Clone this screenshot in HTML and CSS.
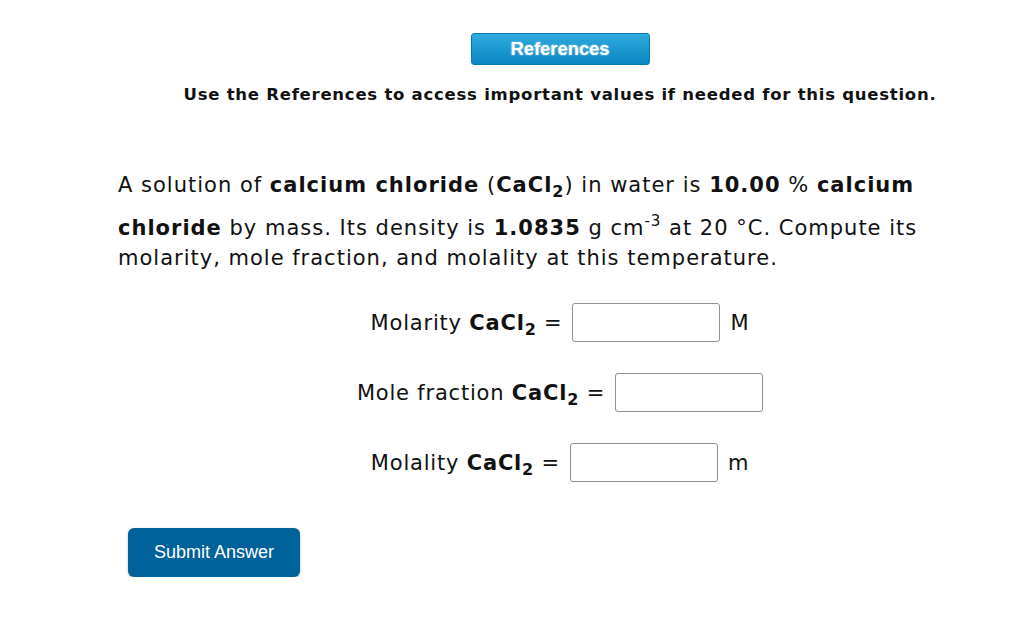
FILE: index.html
```html
<!DOCTYPE html>
<html>
<head>
<meta charset="utf-8">
<link rel="stylesheet" href="styles.css">
</head>
<body>
<div class="page">
  <div class="refbar"><button class="refbtn">References</button></div>
  <p class="instr">Use the References to access important values if needed for this question.</p>
  <p class="question">A solution of <b>calcium chloride</b> (<b>CaCl<sub>2</sub></b>) in water is <b>10.00</b> % <b>calcium chloride</b> by mass. Its density is <b>1.0835</b> g cm<sup>-3</sup> at 20 °C. Compute its molarity, mole fraction, and molality at this temperature.</p>
  <div class="rows">
    <div class="row"><span>Molarity <b>CaCl<sub>2</sub></b> =</span><span class="box"></span><span>M</span></div>
    <div class="row"><span>Mole fraction <b>CaCl<sub>2</sub></b> =</span><span class="box"></span></div>
    <div class="row"><span>Molality <b>CaCl<sub>2</sub></b> =</span><span class="box"></span><span>m</span></div>
  </div>
  <div class="submitbar"><button class="submit">Submit Answer</button></div>
</div>
</body>
</html>
```
FILE: styles.css
```css
html, body { margin: 0; padding: 0; background: #fff; }
.page {
  margin-left: 118px;
  width: 884px;
  font-family: "DejaVu Sans", Verdana, sans-serif;
  color: #111;
}
.refbar { display: flex; justify-content: center; padding-top: 33px; }
.refbtn {
  width: 179px; height: 32px;
  border: 1px solid #0a78b0;
  border-radius: 3px;
  background: linear-gradient(#30abe0, #0a85c1);
  color: #fff;
  font-family: "Liberation Sans", Arial, sans-serif;
  font-weight: bold;
  font-size: 18.4px;
  text-shadow: 0 0 2px rgba(255,255,255,0.7);
  padding: 0;
}
.instr {
  margin: 20px 0 0;
  text-align: center;
  font-weight: bold;
  font-size: 16.5px;
  letter-spacing: 0.75px;
  line-height: 20px;
}
.question {
  margin: 65px 0 0;
  font-size: 21px;
  letter-spacing: 1px;
  line-height: 30px;
  width: 830px;
}
.question sub, .row sub { font-size: 16px; vertical-align: -5px; line-height: 0; }
.question sup { font-size: 15px; vertical-align: 9px; line-height: 42px; }
.row {
  display: flex; align-items: center; gap: 10px;
  font-size: 21px; letter-spacing: 0.8px; height: 39px;
}
.rows { display: flex; flex-direction: column; align-items: center; margin-top: 30px; gap: 31px; }
.row .box {
  width: 146px; height: 37px;
  border: 1px solid #8f8f8f;
  border-radius: 3px;
  background: #fff;
}
.submitbar { padding: 46px 0 0 10px; }
.submit {
  width: 172px; height: 49px;
  border: none;
  border-radius: 6px;
  background: #00629b;
  color: #fff;
  font-family: "Liberation Sans", Arial, sans-serif;
  font-size: 18px;
  box-shadow: 0 1px 3px rgba(0,0,0,0.25);
}
```
